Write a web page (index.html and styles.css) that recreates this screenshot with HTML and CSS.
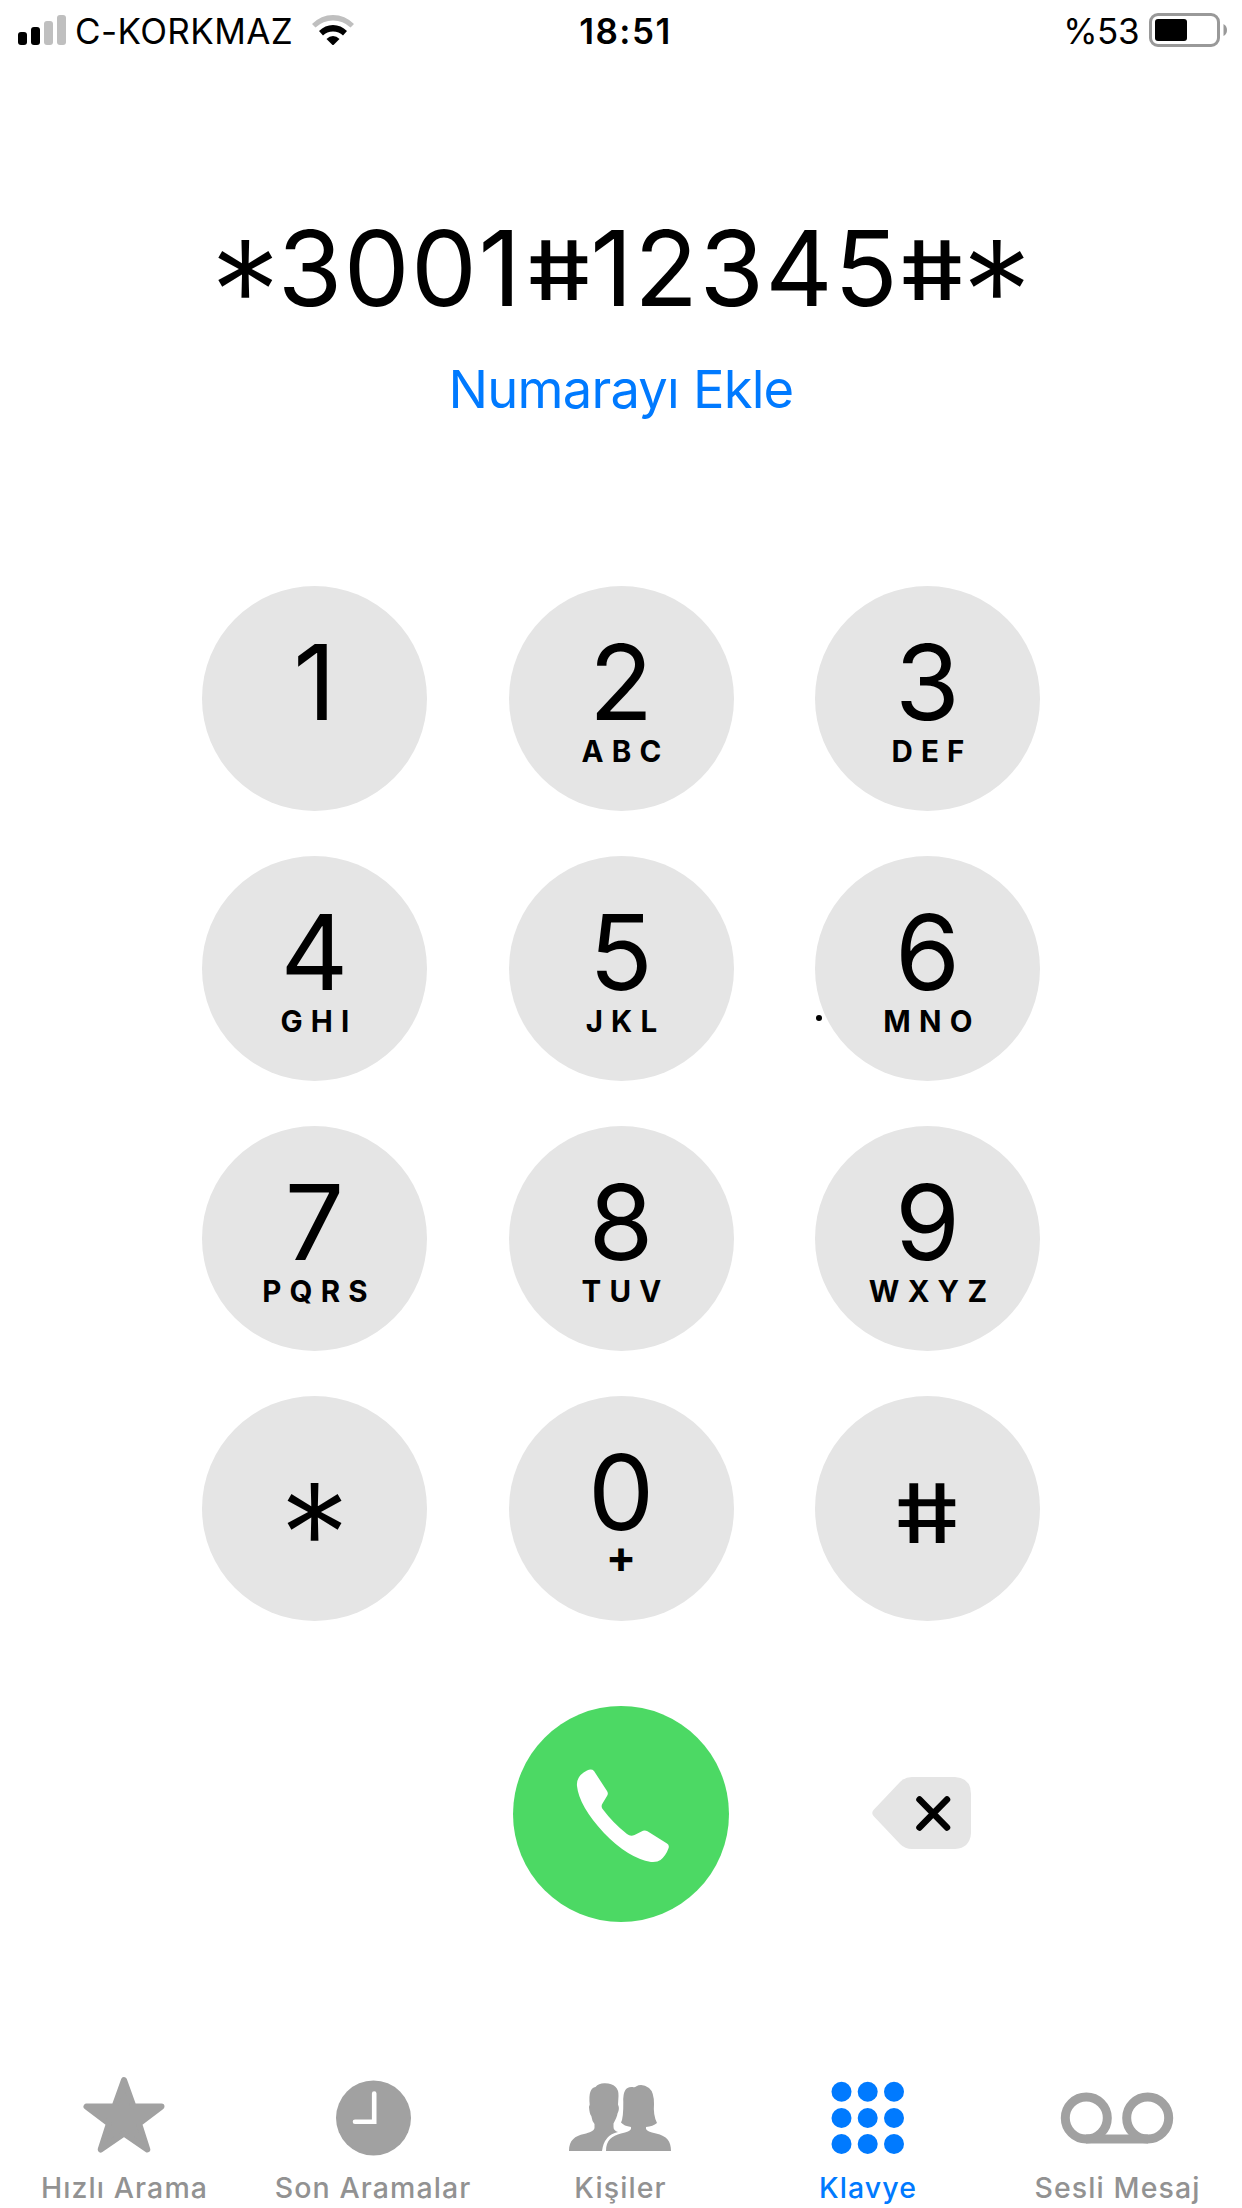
FILE: index.html
```html
<!DOCTYPE html>
<html lang="tr">
<head>
    <meta charset="UTF-8">
    <meta name="viewport" content="width=device-width, initial-scale=1.0">
    <title>Klavye</title>
    <link rel="stylesheet" href="styles.css">
</head>
<body>
    <header class="status-bar">
        <div class="status-left">
            <svg class="signal" width="48" height="30" viewBox="0 0 48 30">
                <rect x="0" y="17" width="9" height="13" rx="3"/>
                <rect x="13" y="12" width="9" height="18" rx="3"/>
                <rect class="off" x="26" y="6" width="9" height="24" rx="3"/>
                <rect class="off" x="39" y="0" width="9" height="30" rx="3"/>
            </svg>
            <span class="carrier">C-KORKMAZ</span>
            <svg class="wifi" width="42" height="30" viewBox="0 0 42 30">
                <path class="off" d="M0 9 Q9 0 21 0 Q33 0 42 9 L38.500 12.500 Q31 5.500 21 5.500 Q11 5.500 3.500 12.500 Z"/>
                <path d="M7 16 Q13 10 21 10 Q29 10 35 16 L31 20.500 Q27 16.500 21 16.500 Q15 16.500 11 20.500 Z"/>
                <path d="M14.500 24 Q17.500 21 21 21 Q24.500 21 27.500 24 L21 30.500 Z"/>
            </svg>
        </div>
        <span class="clock">18:51</span>
        <div class="status-right">
            <span class="percent">%53</span>
            <svg class="battery" width="79" height="34" viewBox="0 0 79 34">
                <rect x="1.500" y="1.500" width="68" height="31" rx="7.500" fill="none" stroke="#999" stroke-width="3"/>
                <rect x="6" y="6" width="32" height="22" rx="3"/>
                <path d="M74.500 11 Q78 13 78 17 Q78 21 74.500 23 Z" fill="#999"/>
            </svg>
        </div>
    </header>

    <section class="number">
        <p class="dialed"><span class="sym"><span class="star">*</span></span>3001<span class="sym after-one"><span class="hash">#</span></span>12345<span class="sym"><span class="hash">#</span></span><span class="sym"><span class="star">*</span></span></p>
        <a class="add-number">Numarayı Ekle</a>
    </section>

    <main class="keypad">
        <div class="key"><span class="digit">1</span></div>
        <div class="key"><span class="digit">2</span><span class="letters">ABC</span></div>
        <div class="key"><span class="digit">3</span><span class="letters">DEF</span></div>
        <div class="key"><span class="digit">4</span><span class="letters">GHI</span></div>
        <div class="key"><span class="digit">5</span><span class="letters">JKL</span></div>
        <div class="key"><span class="digit">6</span><span class="letters">MNO</span><i class="dot"></i></div>
        <div class="key"><span class="digit">7</span><span class="letters">PQRS</span></div>
        <div class="key"><span class="digit">8</span><span class="letters">TUV</span></div>
        <div class="key"><span class="digit">9</span><span class="letters">WXYZ</span></div>
        <div class="key key-symbol"><span class="sym"><span class="star">*</span></span></div>
        <div class="key"><span class="digit">0</span><span class="plus">+</span></div>
        <div class="key key-symbol"><span class="sym"><span class="hash">#</span></span></div>
    </main>

    <div class="actions">
        <div class="call">
            <svg width="94" height="94" viewBox="0 0 94 94">
                <path fill="#fff" d="M11 1.500 Q15.500 -0.500 18 2 L31 22 Q32.500 24.500 31.300 26.500 L26.500 34.500 Q24.500 37.500 27 40.500 Q37 54 51 65 Q54.500 68 58.500 66 L67 61.800 Q69 60.800 71.500 62.300 L91 74.500 Q93.500 76 92.600 79 Q90 86.500 84.500 91 Q81.500 93.500 75 93 Q52 89 28 64 Q3 37 1 17 Q0 7 11 1.500 Z"/>
            </svg>
        </div>
        <svg class="delete" width="99" height="72" viewBox="0 0 99 72">
            <path fill="#e5e5e5" d="M40 0 H83 Q99 1 99 17 V56 Q98 71 83 72 H40 Q33 72 28 67 L1.500 39 Q-1 36 1.500 33 L28 5 Q33 0 40 0 Z"/>
            <path d="M47.500 22.500 L75 50.500 M75 22.500 L47.500 50.500" stroke="#000" stroke-width="6.500" stroke-linecap="round"/>
        </svg>
    </div>

    <nav class="tabs">
        <div class="tab">
            <svg width="104" height="80" viewBox="0 0 104 80">
                <path fill="#a1a1a1" stroke="#a1a1a1" stroke-width="6" stroke-linejoin="round" d="M52 4 L61.500 30.600 H89.500 L67 47.500 L75.300 73.500 L52 57.500 L28.700 73.500 L37 47.500 L14.500 30.600 H42.500 Z"/>
            </svg>
            <span>Hızlı Arama</span>
        </div>
        <div class="tab">
            <svg width="104" height="80" viewBox="0 0 104 80">
                <circle cx="52.500" cy="42" r="37.500" fill="#a1a1a1"/>
                <path d="M53.200 17.500 V45.800 H34" fill="none" stroke="#fff" stroke-width="4.600" stroke-linecap="round"/>
            </svg>
            <span>Son Aramalar</span>
        </div>
        <div class="tab">
            <svg width="104" height="80" viewBox="0 0 104 80">
                <path fill="#a1a1a1" d="M1 75 C1 64 7 60 16 58 C22 56.500 26 55 26.500 52 V48 Q24 45 23.300 40 Q21.500 38 21 31 L21.700 28.500 Q20 12 27.500 11 Q31 7 37 7.300 Q51 8 50.500 20 L50 28.500 Q52 33 49.500 37.500 Q49 41 45.500 47.500 V51 Q45.500 54.500 50 56 Q36 59 34 75 Z"/>
                <path fill="#a1a1a1" d="M38 75 C38 64 44 60 53 57.500 Q62 55.500 63 53 V51 Q56 50 53 46.500 Q55.500 42 55.300 26 Q54.500 10 64.500 11 Q67 11.800 68 10.500 Q74 7 81 12 Q86 16 86 28 Q85 39 89 47 Q85 50.500 78 51 V53 Q79 55.500 88 57.500 C99 60 103 65 103 75 Z"/>
            </svg>
            <span>Kişiler</span>
        </div>
        <div class="tab active">
            <svg width="104" height="80" viewBox="0 0 104 80" fill="#007aff">
                <circle cx="25.500" cy="15.800" r="10"/><circle cx="51.700" cy="15.800" r="10"/><circle cx="78" cy="15.800" r="10"/>
                <circle cx="25.500" cy="42" r="10"/><circle cx="51.700" cy="42" r="10"/><circle cx="78" cy="42" r="10"/>
                <circle cx="25.500" cy="68" r="10"/><circle cx="51.700" cy="68" r="10"/><circle cx="78" cy="68" r="10"/>
            </svg>
            <span>Klavye</span>
        </div>
        <div class="tab">
            <svg width="114" height="80" viewBox="0 0 114 80" fill="none" stroke="#a1a1a1" stroke-width="9">
                <circle cx="26.300" cy="42" r="21"/>
                <circle cx="87.700" cy="42" r="21"/>
                <path d="M26 63 H88"/>
            </svg>
            <span>Sesli Mesaj</span>
        </div>
    </nav>
</body>
</html>
```

FILE: styles.css
```css
body {
    margin: 0;
    width: 1242px;
    height: 2208px;
    overflow: hidden;
    background-color: #fff;
    color: #000;
    font-family: Inter, "Liberation Sans", sans-serif;
}
p {
    margin: 0;
}
svg {
    display: block;
}
.off {
    fill: #bfbfbf;
}

/* Status bar */
.status-bar {
    display: grid;
    grid-template-columns: 1fr auto 1fr;
    height: 60px;
    padding: 0 14px 0 18px;
    box-sizing: border-box;
    font-size: 35px;
    line-height: 62px;
}
.status-left, .status-right {
    display: flex;
}
.status-right {
    justify-content: flex-end;
}
.signal, .wifi {
    margin-top: 15px;
}
.carrier {
    margin-left: 9px;
    letter-spacing: 0.4px;
    width: 237px;
}
.clock {
    padding-left: 5px;
    font-weight: 600;
    letter-spacing: 1.5px;
}
.percent {
    margin-right: 10px;
    letter-spacing: -0.5px;
}
.battery {
    margin-top: 13px;
}

/* Dialed number */
.number {
    height: 526px;
    padding-top: 156px;
    box-sizing: border-box;
    display: flex;
    flex-direction: column;
    align-items: center;
}
.dialed {
    display: flex;
    height: 104px;
    font-size: 104.5px;
    line-height: 104px;
    letter-spacing: 1.4px;
    white-space: nowrap;
}
.add-number {
    margin-top: 39px;
    font-size: 52.5px;
    line-height: 60px;
    letter-spacing: -0.8px;
    color: #007aff;
}

/* the dialer's * and # are smaller than the digits and sit on their middle */
.sym {
    display: flex;
    justify-content: center;
    width: 65px;
    letter-spacing: 0;
}
.dialed .sym {
    margin-top: -3px;
}
.after-one {
    margin-left: 3px;
}
.star {
    font-size: 141px;
    font-weight: 300;
    line-height: 157px;
}
.hash {
    font-size: 82px;
    font-weight: 500;
    line-height: 115px;
    transform: scaleX(1.25) skewX(9.5deg);
}

/* Keypad */
.keypad {
    display: grid;
    grid-template-columns: repeat(3, 225px);
    grid-auto-rows: 225px;
    gap: 45px 81.5px;
    justify-content: center;
}
.key {
    position: relative;
    display: flex;
    flex-direction: column;
    align-items: center;
    padding-top: 44px;
    box-sizing: border-box;
    border-radius: 50%;
    background-color: #e5e5e5;
}
.digit {
    font-size: 105px;
    line-height: 104px;
}
.letters {
    margin-top: 2px;
    padding-left: 9px;
    font-size: 29.5px;
    font-weight: 650;
    line-height: 30px;
    letter-spacing: 8.2px;
}
.plus {
    margin-top: -7px;
    font-size: 45px;
    font-weight: 700;
    line-height: 40px;
}
.key-symbol {
    padding-top: 60px;
}
.dot {
    position: absolute;
    left: 1px;
    top: 159px;
    width: 6px;
    height: 6px;
    border-radius: 50%;
    background-color: #000;
}

/* Call and delete */
.actions {
    display: grid;
    grid-template-columns: 216px 242px;
    justify-content: end;
    align-items: center;
    height: 216px;
    margin-top: 85px;
    padding-right: 271px;
}
.call {
    display: flex;
    align-items: center;
    justify-content: center;
    width: 216px;
    height: 216px;
    padding: 4px 0 0 4px;
    box-sizing: border-box;
    border-radius: 50%;
    background-color: #4cd964;
}
.delete {
    justify-self: end;
    margin-bottom: 2px;
}

/* Tab bar */
.tabs {
    display: grid;
    grid-template-columns: 248px 249px 246px 249px 250px;
    margin-top: 154px;
    height: 132px;
}
.tab {
    display: flex;
    flex-direction: column;
    align-items: center;
    font-size: 28.5px;
    font-weight: 500;
    line-height: 36px;
    letter-spacing: 1.1px;
    color: #929292;
    white-space: nowrap;
}
.tab span {
    margin-top: 14px;
    padding-left: 1px;
}
.active {
    color: #007aff;
}
```
